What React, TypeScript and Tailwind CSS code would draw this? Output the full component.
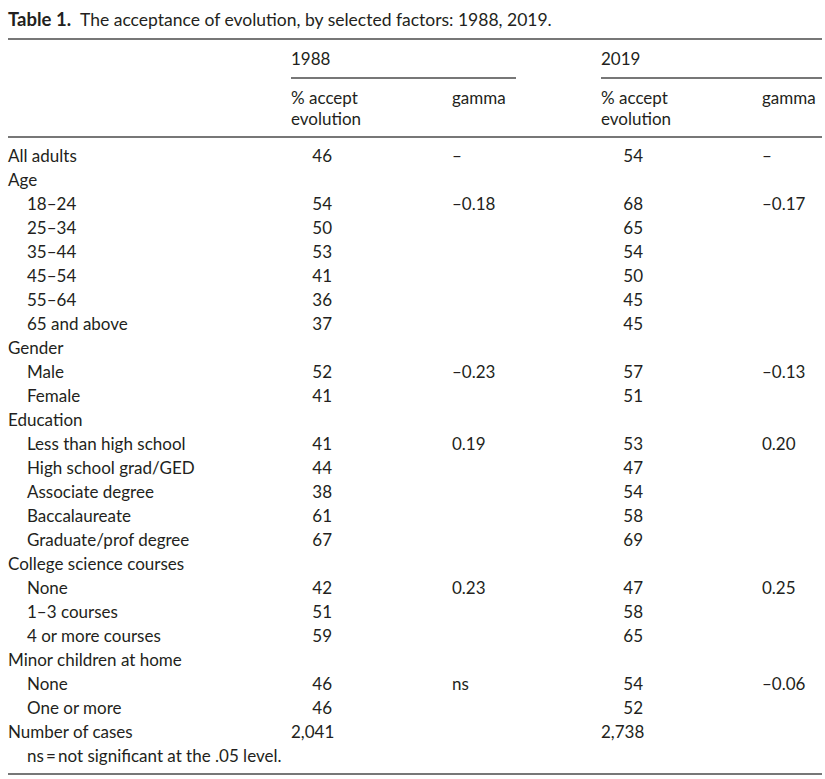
import React from "react";

type Row = {
  label: string;
  indent?: boolean;
  a?: string;
  ga?: string;
  b?: string;
  gb?: string;
};

const ROWS: Row[] = [
  { label: "All adults", a: "46", ga: "–", b: "54", gb: "–" },
  { label: "Age" },
  { label: "18–24", indent: true, a: "54", ga: "–0.18", b: "68", gb: "–0.17" },
  { label: "25–34", indent: true, a: "50", b: "65" },
  { label: "35–44", indent: true, a: "53", b: "54" },
  { label: "45–54", indent: true, a: "41", b: "50" },
  { label: "55–64", indent: true, a: "36", b: "45" },
  { label: "65 and above", indent: true, a: "37", b: "45" },
  { label: "Gender" },
  { label: "Male", indent: true, a: "52", ga: "–0.23", b: "57", gb: "–0.13" },
  { label: "Female", indent: true, a: "41", b: "51" },
  { label: "Education" },
  { label: "Less than high school", indent: true, a: "41", ga: "0.19", b: "53", gb: "0.20" },
  { label: "High school grad/GED", indent: true, a: "44", b: "47" },
  { label: "Associate degree", indent: true, a: "38", b: "54" },
  { label: "Baccalaureate", indent: true, a: "61", b: "58" },
  { label: "Graduate/prof degree", indent: true, a: "67", b: "69" },
  { label: "College science courses" },
  { label: "None", indent: true, a: "42", ga: "0.23", b: "47", gb: "0.25" },
  { label: "1–3 courses", indent: true, a: "51", b: "58" },
  { label: "4 or more courses", indent: true, a: "59", b: "65" },
  { label: "Minor children at home" },
  { label: "None", indent: true, a: "46", ga: "ns", b: "54", gb: "–0.06" },
  { label: "One or more", indent: true, a: "46", b: "52" },
  { label: "Number of cases", a: "2,041", b: "2,738" },
];

const cols = "grid grid-cols-[283px_161px_149px_161px_60px]";

export default function App() {
  return (
    <div
      className="w-[825px] h-[779px] bg-white text-[#231f20] pl-2 pr-[3px] pt-[8px]"
      style={{ fontFamily: "Lato, 'Open Sans', sans-serif" }}
    >
      <div className="text-[17.5px] leading-[22px] h-[22px] whitespace-nowrap">
        <span className="font-bold text-[18.5px]">Table 1.</span>
        <span className="ml-[9px]">The acceptance of evolution, by selected factors: 1988, 2019.</span>
      </div>

      <div className="mt-[8px] border-t-2 border-[#777]" />

      <div className={`${cols} text-[17px]`}>
        <div />
        <div className="col-span-2 pt-[7px]">
          <div className="leading-[24px] h-[24px]">1988</div>
          <div className="mt-[6px] w-[225px] border-t-2 border-[#777]" />
        </div>
        <div className="col-span-2 pt-[7px]">
          <div className="leading-[24px] h-[24px]">2019</div>
          <div className="mt-[6px] border-t-2 border-[#777]" />
        </div>

        <div />
        <div className="pt-[8px] pb-[7px] leading-[21px]">
          % accept
          <br />
          evolution
        </div>
        <div className="pt-[8px] leading-[21px]">gamma</div>
        <div className="pt-[8px] leading-[21px]">
          % accept
          <br />
          evolution
        </div>
        <div className="pt-[8px] leading-[21px]">gamma</div>
      </div>

      <div className="border-t-2 border-[#777]" />

      <div className={`${cols} text-[17px] leading-[24px] pt-[6px]`}>
        {ROWS.map((r, i) => (
          <React.Fragment key={i}>
            <div className={r.indent ? "pl-[19px]" : ""}>{r.label}</div>
            <div className="text-right pr-[120px]">{r.a}</div>
            <div>{r.ga}</div>
            <div className="text-right pr-[119px]">{r.b}</div>
            <div>{r.gb}</div>
          </React.Fragment>
        ))}
        <div className="col-span-5 pl-[19px]">ns&thinsp;=&thinsp;not significant at the .05 level.</div>
      </div>

      <div className="mt-[5px] border-t-2 border-[#777]" />
    </div>
  );
}
